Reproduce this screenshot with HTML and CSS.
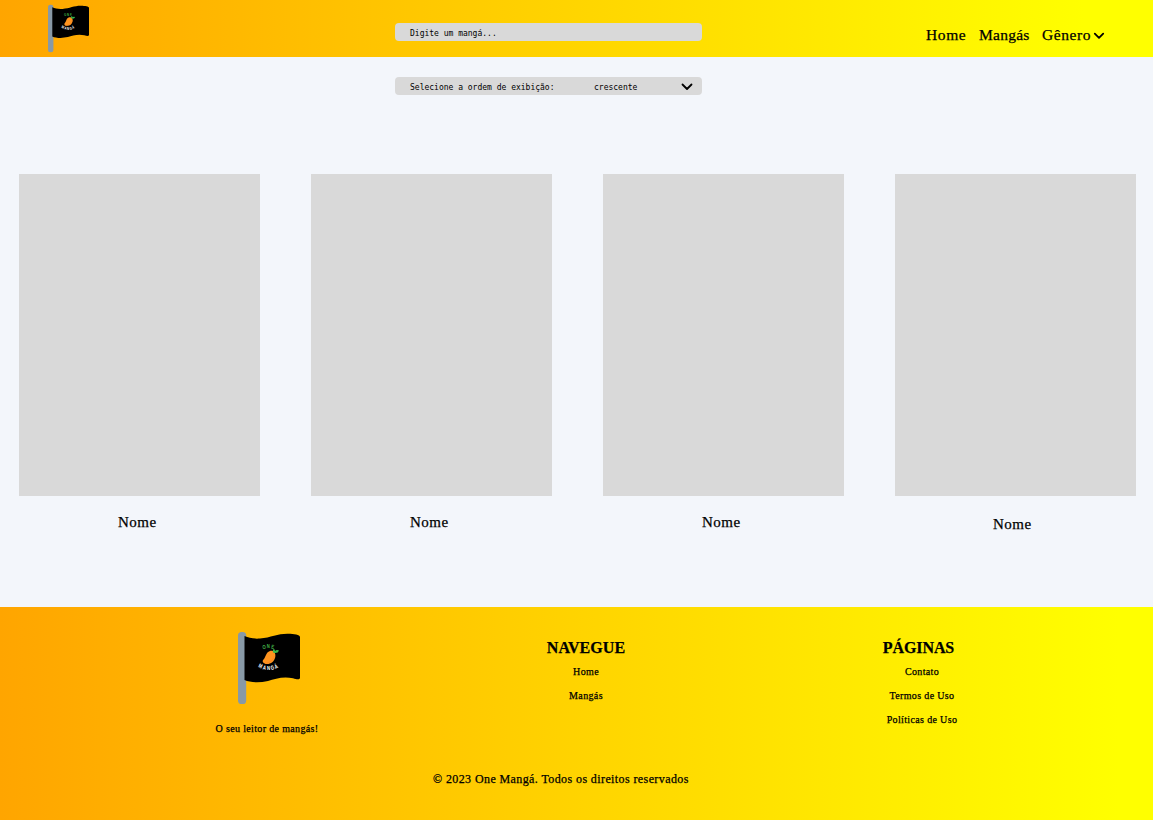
FILE: index.html
```
<!DOCTYPE html>
<html lang="pt-BR">
<head>
<meta charset="utf-8">
<title>One Mangá</title>
<link rel="stylesheet" href="styles.css">
</head>
<body>
<header class="header">
  <svg class="logo" viewBox="0 0 62 74">
    <rect x="0" y="1" width="8.2" height="72" rx="3.6" fill="#8899a6"/>
    <path d="M6.500 5C11 7 16 8 22 7.500C33 6.500 40 2.500 50 2.700C56 2.800 62 3.500 62 6V46.500C62 49 59 48.500 55 47.300C45 45 37 48 30 50C21 52 12 51.500 6.500 49Z" fill="#000"/>
    <path d="M32 20C35.500 19 38 22 37.300 26C36.300 30.500 33 33 29 33C25.500 33 23.500 30.500 25.500 28.500C28 26 27.500 21.500 32 20Z" fill="#ff941f"/>
    <path d="M27 32.300C32 32 35 29 36.300 25" fill="none" stroke="#f98325" stroke-width=".8"/>
    <path d="M35 21.500Q34.500 18 36 18Q37 18.500 37 20Q38.500 18.500 41 19.500Q40 22.500 36.500 22Z" fill="#39b54a"/>
    <g class="flag-text" font-size="5.800" fill="#43b649">
      <text transform="translate(24.700 18.200) rotate(-8) scale(.72 1)">O</text>
      <text transform="translate(28.700 17.400) scale(.72 1)">N</text>
      <text transform="translate(33 17.500) rotate(10) scale(.72 1)">E</text>
    </g>
    <g class="flag-text" font-size="6" fill="#fff">
      <text transform="translate(19.900 36) rotate(25) scale(.72 1)">M</text>
      <text transform="translate(24.500 38.300) rotate(13) scale(.72 1)">A</text>
      <text transform="translate(28.900 39.300) scale(.72 1)">N</text>
      <text transform="translate(33.300 39.100) rotate(-13) scale(.72 1)">G</text>
      <text transform="translate(37.600 37.900) rotate(-24) scale(.72 1)">Á</text>
    </g>
  </svg>
  <div class="field search">Digite um mangá...</div>
  <nav class="nav">
    <a class="nav-home">Home</a>
    <a class="nav-mangas">Mangás</a>
    <a class="nav-genero">Gênero</a>
    <svg class="nav-chevron" viewBox="0 0 12 8"><path class="chevron" d="M1.800 1.700L6 5.900L10.200 1.700"/></svg>
  </nav>
</header>
<main class="main">
  <div class="field order">
    <span class="order-label">Selecione a ordem de exibição:</span>
    <span>crescente</span>
    <svg class="order-chevron" viewBox="0 0 12 8"><path class="chevron" d="M1.500 1.500L6 6L10.500 1.500"/></svg>
  </div>
  <section class="cards">
    <article class="card"><div class="cover"></div><h2 class="name">Nome</h2></article>
    <article class="card"><div class="cover"></div><h2 class="name">Nome</h2></article>
    <article class="card"><div class="cover"></div><h2 class="name">Nome</h2></article>
    <article class="card"><div class="cover"></div><h2 class="name name-last">Nome</h2></article>
  </section>
</main>
<footer class="footer">
  <div class="columns">
    <div class="brand">
      <svg class="brand-logo" viewBox="0 0 62 74">
        <rect x="0" y="1" width="8.2" height="72" rx="3.6" fill="#8899a6"/>
        <path d="M6.500 5C11 7 16 8 22 7.500C33 6.500 40 2.500 50 2.700C56 2.800 62 3.500 62 6V46.500C62 49 59 48.500 55 47.300C45 45 37 48 30 50C21 52 12 51.500 6.500 49Z" fill="#000"/>
        <path d="M32 20C35.500 19 38 22 37.300 26C36.300 30.500 33 33 29 33C25.500 33 23.500 30.500 25.500 28.500C28 26 27.500 21.500 32 20Z" fill="#ff941f"/>
        <path d="M27 32.300C32 32 35 29 36.300 25" fill="none" stroke="#f98325" stroke-width=".8"/>
        <path d="M35 21.500Q34.500 18 36 18Q37 18.500 37 20Q38.500 18.500 41 19.500Q40 22.500 36.500 22Z" fill="#39b54a"/>
        <g class="flag-text" font-size="5.800" fill="#43b649">
          <text transform="translate(24.700 18.200) rotate(-8) scale(.72 1)">O</text>
          <text transform="translate(28.700 17.400) scale(.72 1)">N</text>
          <text transform="translate(33 17.500) rotate(10) scale(.72 1)">E</text>
        </g>
        <g class="flag-text" font-size="6" fill="#fff">
          <text transform="translate(19.900 36) rotate(25) scale(.72 1)">M</text>
          <text transform="translate(24.500 38.300) rotate(13) scale(.72 1)">A</text>
          <text transform="translate(28.900 39.300) scale(.72 1)">N</text>
          <text transform="translate(33.300 39.100) rotate(-13) scale(.72 1)">G</text>
          <text transform="translate(37.600 37.900) rotate(-24) scale(.72 1)">Á</text>
        </g>
      </svg>
      <p class="slogan">O seu leitor de mangás!</p>
    </div>
    <div class="links navigate">
      <h3 class="links-title">NAVEGUE</h3>
      <a>Home</a>
      <a>Mangás</a>
    </div>
    <div class="links pages">
      <h3 class="links-title pages-title">PÁGINAS</h3>
      <a>Contato</a>
      <a>Termos de Uso</a>
      <a>Políticas de Uso</a>
    </div>
  </div>
  <p class="copyright">© 2023 One Mangá. Todos os direitos reservados</p>
</footer>
</body>
</html>
```
FILE: styles.css
```
* { box-sizing: border-box; margin: 0; padding: 0; }
body {
  width: 1153px; height: 820px; overflow: hidden;
  display: flex; flex-direction: column;
  background: #f3f6fb; color: #000;
  font-family: "Liberation Serif", "Times New Roman", serif;
  -webkit-text-stroke: .25px #000;
}
.flag-text { font-family: "Liberation Sans", Arial, sans-serif; font-weight: 700; -webkit-text-stroke: 0; }
.chevron { fill: none; stroke: #000; stroke-width: 1.8; stroke-linecap: round; stroke-linejoin: round; }
.header { background: linear-gradient(90deg, #ffa500 0%, #ffff00 94%); }
.footer { background: linear-gradient(90deg, #ffa500 0%, #ffff00 97%); }
.header { height: 57px; display: flex; align-items: flex-start; flex: none; }
.logo { width: 41px; height: 49px; margin: 4px 0 0 48px; }
.field {
  width: 307px; height: 18px; border-radius: 4px; background: #d9d9d9;
  padding: 2px 9px 0 15px; display: flex; align-items: center;
  font: 8px "DejaVu Sans Mono", monospace; white-space: pre;
  -webkit-text-stroke: 0;
}
.search { margin: 23px 0 0 306px; }
.nav { display: flex; margin: 25px 0 0 224px; font-size: 15.5px; line-height: 20px; letter-spacing: .6px; }
.nav-home { width: 53px; }
.nav-mangas { width: 63px; letter-spacing: .25px; }
.nav-genero { width: 51px; }
.nav-chevron { width: 12px; height: 8px; margin-top: 7px; }
.main { height: 550px; flex: none; padding-top: 20px; }
.order { margin-left: 395px; }
.order-label { width: 184px; }
.order-chevron { width: 12px; height: 8px; margin-left: auto; }
.cards { display: grid; grid-template-columns: repeat(4, 241px); column-gap: 51px; padding: 79px 0 0 19px; }
.cover { height: 322px; background: #d9d9d9; }
.name { font-size: 15px; font-weight: 400; letter-spacing: .5px; line-height: 20px; margin-top: 16px; padding-left: 99px; }
.name-last { margin-top: 18px; padding-left: 98px; }
.footer { height: 213px; flex: none; }
.columns { display: flex; height: 156px; }
.brand { width: 200px; margin-left: 167px; display: flex; flex-direction: column; align-items: center; padding-top: 24px; }
.brand-logo { width: 62px; height: 74px; margin-left: 4px; }
.slogan { font-size: 10px; line-height: 14px; margin-top: 17px; letter-spacing: .35px; }
.links { width: 160px; padding-top: 29px; display: flex; flex-direction: column; align-items: center; font-size: 10px; line-height: 24px; letter-spacing: .35px; }
.navigate { margin-left: 139px; }
.pages { margin-left: 176px; }
.links-title { font-size: 16px; line-height: 24px; letter-spacing: .05px; }
.pages-title { margin-right: 7px; letter-spacing: -.1px; }
.copyright { font-size: 12px; line-height: 18px; letter-spacing: .4px; padding: 7px 0 0 433px; }
```
